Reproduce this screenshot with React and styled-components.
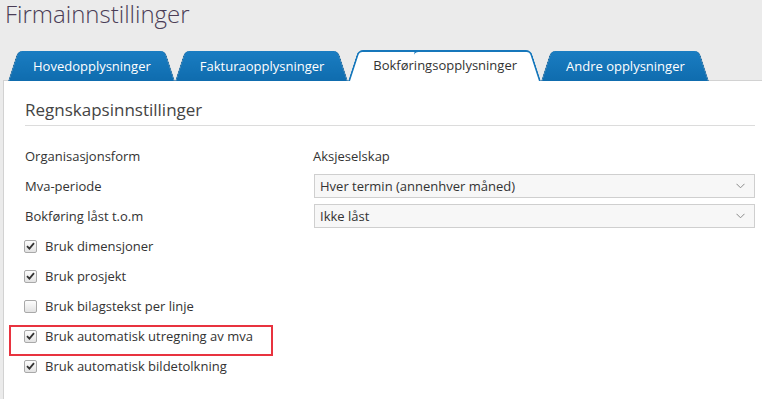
import React from 'react'
import styled, {createGlobalStyle} from 'styled-components'

const GlobalStyle = createGlobalStyle`
	html, body {
		margin: 0;
		padding: 0;
		background: #ebebeb;
		font-family: 'Open Sans', 'Noto Sans', sans-serif;
		color: #333;
	}
	* {
		box-sizing: border-box;
	}
`

const blue = '#1677bb'

const Page = styled.div`
	min-height: 399px;
	display: flex;
	flex-direction: column;
	overflow: hidden;
`

const Title = styled.h1`
	margin: 0;
	padding: 1px 0 0 5px;
	font-size: 24px;
	line-height: 25px;
	font-weight: 300;
	color: #4a3d56;
`

const TabBar = styled.div`
	display: flex;
	align-items: flex-end;
	margin-top: 24px;
	margin-bottom: -1px;
	padding-left: 8px;
	position: relative;
	z-index: 2;
`

const Tab = styled.div`
	position: relative;
	z-index: ${p => (p.$active ? 3 : 1)};
	height: ${p => (p.$active ? 31 : 30)}px;
	margin-top: ${p => (p.$active ? 0 : 1)}px;
	padding: 0 24px 1px 25px;
	display: flex;
	align-items: center;
	font-size: 13px;
	white-space: nowrap;
	color: ${p => (p.$active ? '#333' : '#fff')};
	cursor: pointer;

	&::before,
	&::after {
		content: '';
		position: absolute;
		top: 0;
		bottom: 0;
		width: 60%;
		z-index: -1;
		border-radius: 5px 5px 0 0;
		background: ${p => (p.$active ? '#fff' : 'linear-gradient(#1a7dc2, #0f6cae)')};
		border-top: ${p => (p.$active ? `2px solid ${blue}` : 'none')};
	}
	&::before {
		left: 0;
		transform-origin: bottom left;
		transform: skewX(-18deg);
		border-left: ${p => (p.$active ? `2px solid ${blue}` : '1px solid #0c5f9a')};
	}
	&::after {
		right: 0;
		transform-origin: bottom right;
		transform: skewX(18deg);
		border-right: ${p => (p.$active ? `2px solid ${blue}` : '1px solid #0c5f9a')};
	}
`

const Panel = styled.div`
	flex: 1;
	margin-left: 3px;
	background: #fff;
	border-top: 1px solid #d2d2d2;
	border-left: 1px solid #d2d2d2;
	padding: 17px 7px 20px 21px;
	position: relative;
	z-index: 1;
`

const SectionTitle = styled.h2`
	margin: 0 0 15px;
	padding-bottom: 3px;
	font-size: 17px;
	line-height: 24px;
	font-weight: 400;
	color: #444;
	border-bottom: 1px solid #dcdcdc;
`

const FieldRow = styled.div`
	display: grid;
	grid-template-columns: 288px 1fr;
	align-items: center;
	height: 30px;
	font-size: 13px;
	line-height: 30px;
`

const Label = styled.div`
	color: #333;
`

const Value = styled.div`
	color: #333;
`

const Select = styled.div`
	height: 24px;
	margin-left: 1px;
	display: flex;
	align-items: center;
	justify-content: space-between;
	padding: 0 9px 0 5px;
	border: 1px solid #cfcfcf;
	background: #f7f7f7;
	color: #333;
	line-height: 22px;
`

const Chevron = () => (
	<svg width="9" height="6" viewBox="0 0 9 6">
		<path d="M0.5 0.8 L4.5 4.8 L8.5 0.8" fill="none" stroke="#8a8a8a" strokeWidth="1" />
	</svg>
)

const CheckRow = styled.label`
	position: relative;
	display: flex;
	align-items: center;
	gap: 8px;
	height: 30px;
	font-size: 13px;
	color: #333;

	${p =>
		p.$highlight &&
		`
		&::after {
			content: '';
			position: absolute;
			left: -16px;
			top: 4px;
			width: 260px;
			height: 27px;
			border: 2px solid #e8333f;
			pointer-events: none;
		}
	`}
`

const Box = styled.span`
	width: 13px;
	height: 13px;
	margin-left: -1px;
	border: 1px solid #a9a9a9;
	border-radius: 2px;
	background: linear-gradient(#fdfdfd, #e2e2e2);
	display: flex;
	align-items: center;
	justify-content: center;
	flex-shrink: 0;
`

const Check = () => (
	<svg width="9" height="8" viewBox="0 0 9 8">
		<path d="M1 4.2 L3.4 6.6 L8 1.2" fill="none" stroke="#333" strokeWidth="1.8" />
	</svg>
)

const tabs = [
	{label: 'Hovedopplysninger'},
	{label: 'Fakturaopplysninger'},
	{label: 'Bokføringsopplysninger', active: true},
	{label: 'Andre opplysninger'},
]

const checks = [
	{label: 'Bruk dimensjoner', checked: true},
	{label: 'Bruk prosjekt', checked: true},
	{label: 'Bruk bilagstekst per linje', checked: false},
	{label: 'Bruk automatisk utregning av mva', checked: true, highlight: true},
	{label: 'Bruk automatisk bildetolkning', checked: true},
]

const App = () => (
	<>
		<GlobalStyle />
		<Page>
			<Title>Firmainnstillinger</Title>
			<TabBar>
				{tabs.map(({label, active}) => (
					<Tab key={label} $active={active}>
						{label}
					</Tab>
				))}
			</TabBar>
			<Panel>
				<SectionTitle>Regnskapsinnstillinger</SectionTitle>
				<FieldRow>
					<Label>Organisasjonsform</Label>
					<Value>Aksjeselskap</Value>
				</FieldRow>
				<FieldRow>
					<Label>Mva-periode</Label>
					<Select>
						<span>Hver termin (annenhver måned)</span>
						<Chevron />
					</Select>
				</FieldRow>
				<FieldRow>
					<Label>Bokføring låst t.o.m</Label>
					<Select>
						<span>Ikke låst</span>
						<Chevron />
					</Select>
				</FieldRow>
				{checks.map(({label, checked, highlight}) => (
					<CheckRow key={label} $highlight={highlight}>
						<Box>{checked && <Check />}</Box>
						{label}
					</CheckRow>
				))}
			</Panel>
		</Page>
	</>
)

export default App
